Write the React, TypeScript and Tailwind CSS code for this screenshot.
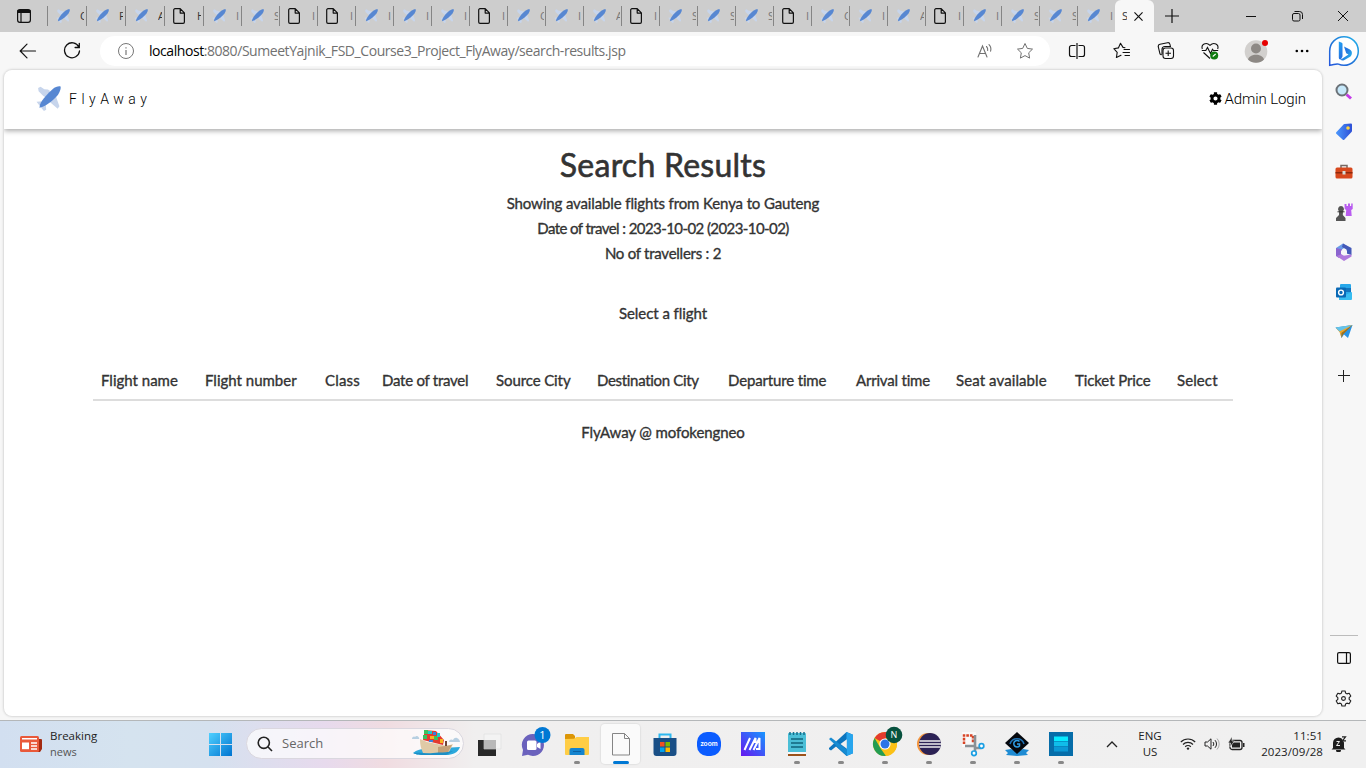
import React from "react";
import { FaCog } from "react-icons/fa";

const Plane = ({ className }: { className: string }) => (
  <svg viewBox="0 0 24 24" className={className}>
    <path d="M2 1.800 4.400.6 8 3l3.500.3 2 1.500L9.500 11 7 9.500 2.500 5zM19 8l.8 4 2.700 7.500-1.700 2.300L13 15zM.5 15.200l6.100-.5 2.800 2.800.4 5.300-2.200 1.200-3-3.500z" fill="#c7d5ec" />
    <path d="M23.600.5c-2-.5-5 .3-7.700 2.600C12 6.500 6 12.500 4 17.500L3.300 20.800l3.200-.9c5.200-2.300 11.500-7.700 14.700-11.600C23.400 4.800 24 2.200 23.600.5z" fill="#5787d2" />
  </svg>
);

const Doc = () => (
  <svg viewBox="0 0 12 16" className="h-4 w-3" fill="none" stroke="#111" strokeWidth="1.200" strokeLinejoin="round">
    <path d="M2 .7h5.200l4.200 4.200V14a1.300 1.300 0 0 1-1.300 1.300H2A1.300 1.300 0 0 1 .7 14V2A1.300 1.300 0 0 1 2 .7zM7.200.9v4.200h4.200" />
  </svg>
);

const tabs: [string, string][] = [
  ["p", "C"], ["p", "F"], ["p", "A"], ["d", "H"], ["p", "I"], ["p", "S"], ["d", "I"], ["d", "I"], ["p", "I"], ["p", "I"],
  ["p", "I"], ["d", "I"], ["p", "C"], ["p", "I"], ["p", "A"], ["d", "I"], ["p", "S"], ["p", "S"], ["p", "S"], ["d", "I"],
  ["p", "C"], ["p", "I"], ["p", "A"], ["d", "I"], ["p", "I"], ["p", "S"], ["p", "S"], ["p", "I"],
];

const TabStrip = () => (
  <div className="flex h-8 shrink-0 items-center bg-[#cdcdcd]">
    <div className="flex w-[47px] shrink-0 items-center pl-[17px]">
      <svg viewBox="0 0 14 14" className="h-3.5 w-3.5" fill="none" stroke="#111" strokeWidth="1.200">
        <rect x=".6" y=".6" width="12.800" height="12.800" rx="2.300" />
        <path d="M1 1.500h12v2H1z" fill="#111" />
        <path d="M4 4v9" />
      </svg>
    </div>
    {tabs.map(([kind, letter], i) => (
      <div key={i} className={`flex h-5 shrink-0 items-center border-l border-[#858585] ${i < 4 ? "w-[39px]" : "w-[38px]"}`}>
        <div className="flex w-[32px] shrink-0 items-center pl-[8px]">
          {kind === "p" ? <Plane className="h-3.5 w-3.5" /> : <Doc />}
        </div>
        <span className={`w-[4px] overflow-hidden font-['Open_Sans',sans-serif] text-[11px] leading-4 ${i < 4 ? "text-[#333]" : "text-[#777]"}`}>{letter}</span>
      </div>
    ))}
    <div className="flex h-8 w-[39px] shrink-0 items-center rounded-t-[6px] bg-[#f7f7f7] pl-[7px]">
      <span className="w-[5px] overflow-hidden font-['Open_Sans',sans-serif] text-[11px] text-[#333]">S</span>
      <svg viewBox="0 0 10 10" className="ml-[7px] h-[9px] w-[9px]" stroke="#111" strokeWidth="1.300"><path d="M.5.5l9 9M9.500.5l-9 9" /></svg>
    </div>
    <svg viewBox="0 0 14 14" className="ml-[11px] h-3.5 w-3.5 shrink-0" stroke="#111" strokeWidth="1.200"><path d="M7 0v14M0 7h14" /></svg>
    <div className="ml-auto flex shrink-0 items-center gap-[36px] pr-[18px]">
      <svg viewBox="0 0 10 10" className="h-[10px] w-[10px]" stroke="#111"><path d="M0 5.500h10" /></svg>
      <svg viewBox="0 0 10 10" className="h-[10px] w-[10px] overflow-visible" stroke="#111" fill="none"><rect x=".5" y="2.500" width="7.500" height="7.500" rx="1.500" /><path d="M2.500.5h5a3 3 0 0 1 3 3v4.500" /></svg>
      <svg viewBox="0 0 10 10" className="h-[10px] w-[10px]" stroke="#111"><path d="M0 0l10 10M10 0L0 10" /></svg>
    </div>
  </div>
);

const Bing = () => (
  <svg viewBox="0 0 32 32" className="h-8 w-8 overflow-visible">
    <defs>
      <linearGradient id="bing" x1="0" y1="0" x2="1" y2="1"><stop stopColor="#21a5f4" /><stop offset=".5" stopColor="#2672e0" /><stop offset="1" stopColor="#25c3ec" /></linearGradient>
      <linearGradient id="bub" x1="0" y1="1" x2="1" y2="0"><stop stopColor="#2457dc" /><stop offset=".5" stopColor="#217bd9" /><stop offset="1" stopColor="#21b5ec" /></linearGradient>
    </defs>
    <path d="M1.700 30.300V16A14.300 14.300 0 1 1 16 30.300c-2 0-4-.5-5.500-1.200-2.500-.8-5 .8-8.800 1.200z" fill="#fff" stroke="url(#bub)" strokeWidth="1.500" />
    <path d="M10.800 6.500l3 1.200c.5.200.7.600.7 1.200v12.600l-1.500 2.800c-1.300.4-2.200-.3-2.200-1.800zM16 11.500l5.500 2.800c2 1 2.700 2.700 2.300 4.700-.3 1.600-1.200 2.500-2.500 3.300l-5.300 2.900c-1.300.7-2.600.3-3.500-.5l8-5.200-2.300-1.300z" fill="url(#bing)" />
  </svg>
);

const star = "M9 1.500l2.300 4.900 5.200.7-3.800 3.700.9 5.300L9 13.600l-4.600 2.500.9-5.300L1.500 7.100l5.200-.7z";

const Toolbar = () => (
  <div className="flex h-[38px] shrink-0 items-center">
    <svg viewBox="0 0 18 16" className="ml-[19px] h-4 w-[18px]" fill="none" stroke="#111" strokeWidth="1.200" strokeLinecap="round"><path d="M16.500 8H1.500M8 1.200L1.200 8 8 14.800" /></svg>
    <svg viewBox="0 0 18 18" className="ml-[26px] h-[18px] w-[18px]" fill="none" stroke="#111" strokeWidth="1.300" strokeLinecap="round"><path d="M15.800 5A7.500 7.500 0 1 0 16.500 9M16.300 1.300v4.200h-4.200" /></svg>
    <div className="ml-[19px] flex h-[30px] w-[950px] shrink-0 items-center rounded-full bg-white pl-[18px]">
      <svg viewBox="0 0 16 16" className="h-4 w-4 shrink-0" fill="none" stroke="#777" strokeWidth="1"><circle cx="8" cy="8" r="7.500" /><path d="M8 7v5M8 4.300v1.200" strokeWidth="1.200" /></svg>
      <span className="ml-[15px] w-[480px] shrink-0 whitespace-nowrap font-['Open_Sans',sans-serif] text-[14px] leading-5 tracking-[-0.44px] text-[#717171]"><span className="text-black">localhost</span>:8080/SumeetYajnik_FSD_Course3_Project_FlyAway/search-results.jsp</span>
      <svg viewBox="0 0 18 16" className="ml-[348px] h-4 w-[18px] shrink-0" fill="none" stroke="#717171" strokeWidth="1.100" strokeLinecap="round"><path d="M1 14L5.500 3l4.500 11M2.500 10.500h6M9.500 3.500c1 1 1.400 2.300 1.200 4M12 1.700c1.700 1.700 2.300 4 1.600 6.500" /></svg>
      <svg viewBox="0 0 18 18" className="ml-[21px] h-[18px] w-[18px] shrink-0" fill="none" stroke="#717171" strokeLinejoin="round"><path d={star} /></svg>
    </div>
    <svg viewBox="0 0 18 16" className="ml-[18px] h-4 w-[18px]" fill="none" stroke="#111" strokeWidth="1.200"><path d="M7.500 2.500H3.500A2 2 0 0 0 1.500 4.500v7a2 2 0 0 0 2 2h4M10.500 2.500h4a2 2 0 0 1 2 2v7a2 2 0 0 1-2 2h-4M9 0v16" /></svg>
    <svg viewBox="0 0 18 18" className="ml-[27px] h-[18px] w-[18px]" fill="none" stroke="#111" strokeWidth="1.100" strokeLinecap="round" strokeLinejoin="round"><path d="M12 5.700l-2-.3L7.500 1.300 5.400 5.900.8 6.700l3.400 3.600-.8 5.200L8 13.200M11 7.500h5.500M10 10.500h6.500M12 13.500h4.500" /></svg>
    <svg viewBox="0 0 18 18" className="ml-[26px] h-[18px] w-[18px]" fill="none" stroke="#111" strokeWidth="1.100"><rect x="6" y="6" width="10.500" height="10.500" rx="2.500" /><path d="M11.200 8.500v5.500M8.500 11.200H14M4.500 13L3 12 1.300 5C1 3.500 1.500 2.500 3 2.200l7.500-1.500c1.300-.2 2.200.4 2.500 1.800l.3 1.500M5 12.500V7.500a3 3 0 0 1 3-3h6" /></svg>
    <svg viewBox="0 0 18 18" className="ml-[26px] h-[18px] w-[18px] overflow-visible" fill="none" stroke="#111" strokeWidth="1.100"><path d="M1.300 7C-.2 2.500 5-.5 9 3.300c4-3.800 9.200-.8 7.700 3.700M.8 8.500h4l1.700-3 3 6 2-4.300 1 1.300h4.700M2.500 10.500L9 16.500" /><circle cx="13.200" cy="13.500" r="4" fill="#107c10" stroke="none" /><path d="M11.700 14.500l3-2.500" stroke="#fff" /></svg>
    <svg viewBox="0 0 24 24" className="ml-[25px] h-6 w-6 overflow-visible"><circle cx="12" cy="12.500" r="11.300" fill="#d2d0ce" /><circle cx="12" cy="9.500" r="5" fill="#8d8985" /><path d="M4 20.500c1.300-6.500 14.700-6.500 16 0a11.300 11.300 0 0 1-16 0z" fill="#8d8985" /><circle cx="21" cy="4" r="3" fill="#e60000" /></svg>
    <svg viewBox="0 0 14 4" className="ml-[27px] h-1 w-3.5"><circle cx="1.800" cy="2" r="1.300" /><circle cx="7" cy="2" r="1.300" /><circle cx="12.200" cy="2" r="1.300" /></svg>
    <div className="ml-auto mr-[6px]"><Bing /></div>
  </div>
);

const Cell = ({ children }: { children: React.ReactNode }) => <div className="flex h-10 w-full items-center justify-center">{children}</div>;
const s18 = "h-[18px] w-[18px] overflow-visible";

const Sidebar = () => (
  <aside className="flex w-[43px] shrink-0 flex-col items-center pt-[2px]">
    <Cell><svg viewBox="0 0 18 18" className={s18}><path d="M11.500 11.500l4.500 4" stroke="#c43ae8" strokeWidth="3" /><circle cx="7" cy="7" r="5.500" fill="#c6e8fa" stroke="#6c7278" strokeWidth="2" /></svg></Cell>
    <Cell><svg viewBox="0 0 18 18" className={s18}><defs><linearGradient id="tag"><stop stopColor="#4993fa" /><stop offset="1" stopColor="#3053d8" /></linearGradient></defs><path d="M9.500 2L16 1.500v6.500L8.500 16 2 10z" fill="url(#tag)" stroke="url(#tag)" strokeWidth="2" strokeLinejoin="round" /><circle cx="13" cy="5" r="1.800" fill="#ffd43b" /></svg></Cell>
    <Cell><svg viewBox="0 0 18 18" className={s18}><path d="M6 5V2.500h6V5" fill="none" stroke="#766762" strokeWidth="1.500" /><rect x=".5" y="4.500" width="17" height="11" rx="1.500" fill="#d7481d" /><path d="M.5 9h17v1.500H.5z" fill="#8e2a0e" /><path d="M7.500 8h3v3.500h-3z" fill="#d6ddd8" /></svg></Cell>
    <Cell><svg viewBox="0 0 18 18" className={s18}><path d="M9.500 1h2v2h1.500V.5h2V3h1.200V.5h1.500v5.500l-1.500 1 .5 6h-6l.5-6-1.500-1z" fill="#b95cf0" /><path d="M6 3a3 3 0 0 1 2 5.200l-.2 3.800 2.700 3V18H1v-3l3-3V8.200A3 3 0 0 1 6 3z" fill="#555" /><path d="M2.500 8.800h7" stroke="#333" /></svg></Cell>
    <Cell><svg viewBox="0 0 18 18" className={s18}><path d="M1 5L8 .5 12 3 7 6.500v5L1 13z" fill="#6a9be8" /><path d="M1 5v8l3 2 3-3.500v-5z" fill="#8b65cf" /><path d="M8 .5l8.500 4.500v7l-5-1.500V6.500L7 4z" fill="#4359b8" /><path d="M1.500 13l5.500-2 3 1.500 6.500-1v2L9 18z" fill="#b079dd" /><path d="M9 6l3 1.700v3.400L9 12.800l-3-1.700V7.700z" fill="#f7f7f7" /></svg></Cell>
    <Cell><svg viewBox="0 0 18 18" className={s18}><rect x="5" y="1" width="11" height="13" rx="1" fill="#28a8ea" /><path d="M5 5h11v4H5z" fill="#1375bd" /><path d="M4 9l6 3 7-3v7a1 1 0 0 1-1 1H4z" fill="#37bdf1" /><rect x="1" y="4.500" width="10" height="10" rx="1" fill="#0969b5" /><circle cx="6" cy="9.500" r="2.400" fill="none" stroke="#fff" strokeWidth="1.400" /></svg></Cell>
    <Cell><svg viewBox="0 0 18 18" className={s18}><path d="M.5 4.500L17.500 2 13 15 9 11.500 6.500 15 5 9z" fill="#2793e6" /><path d="M1 5L17.500 2 6.500 10v5L4.500 9z" fill="#f5a623" /><path d="M.5 4.500L17.500 2 4.500 8.500z" fill="#62c3ec" /><path d="M6.500 10l11-8L8 11.500 6.500 15z" fill="#a9710f" /></svg></Cell>
    <div className="mt-1 w-full"><Cell><svg viewBox="0 0 12 12" className="h-3 w-3 overflow-visible" stroke="#222"><path d="M5.500 0v12M0 5.500h12" /></svg></Cell></div>
    <div className="mt-auto h-px w-7 bg-[#bcbcbc]" />
    <div className="w-full pb-[2px] pt-[2px]">
      <Cell><svg viewBox="0 0 14 12" className="h-3 w-3.5" fill="none" stroke="#111" strokeWidth="1.200"><rect x=".6" y=".6" width="12.800" height="10.800" rx="1.500" /><path d="M9.500.6v10.800" /></svg></Cell>
      <Cell><svg viewBox="0 0 18 18" className="h-[17px] w-[17px] overflow-visible" fill="none" stroke="#222" strokeWidth="1.200" strokeLinejoin="round"><path d="M7.300 1h3.400l.5 2.300 1.400.8L15 3.400l1.700 3L15 8.100v1.800l1.700 1.700-1.700 3-2.400-.7-1.400.8-.5 2.300H7.300l-.5-2.300-1.400-.8-2.400.7-1.700-3L3 9.900V8.100L1.300 6.400l1.700-3 2.400.7 1.400-.8z" /><circle cx="9" cy="9" r="2" /></svg></Cell>
    </div>
  </aside>
);

const bold = "whitespace-nowrap font-['Lato',sans-serif] text-[#333] [-webkit-text-stroke:0.35px_#333]";

const Page = () => (
  <main className="mb-1 ml-1 flex w-[1318px] shrink-0 flex-col overflow-hidden rounded-lg bg-white shadow-[0_0_2px_1px_#d8d8d8]">
    <header className="flex h-[59px] shrink-0 items-center pb-[2px] pl-[32px] pr-4 shadow-[0_2px_5px_#aaa]">
      <Plane className="h-[25px] w-[25px]" />
      <span className="ml-[8px] font-['Roboto',sans-serif] text-[14px] font-light leading-5 tracking-[4.500px] text-black">FlyAway</span>
      <span className="ml-auto flex items-center gap-[3px] font-['Roboto',sans-serif] text-[15px] font-light leading-5 tracking-[-0.100px] text-black"><FaCog className="h-[13px] w-[13px]" />Admin Login</span>
    </header>
    <section className="flex flex-col items-center">
      <h1 className="mt-[18px] whitespace-nowrap font-['Lato',sans-serif] text-[32px] leading-[35px] tracking-[0.250px] text-[#333] [-webkit-text-stroke:0.6px_#333]">Search Results</h1>
      <p className={`${bold} mt-[9px] text-[15px] leading-[25px] tracking-[-0.12px]`}>Showing available flights from Kenya to Gauteng</p>
      <p className={`${bold} text-[15px] leading-[25px] tracking-[-0.58px]`}>Date of travel : 2023-10-02 (2023-10-02)</p>
      <p className={`${bold} text-[15px] leading-[25px] tracking-[-0.25px]`}>No of travellers : 2</p>
      <p className={`${bold} mt-[35px] text-[15px] leading-[25px] tracking-[-0.05px]`}>Select a flight</p>
      <div className={`${bold} mt-[36px] flex h-[39px] w-[1140px] items-center border-b-2 border-[#ddd] pl-[8px] text-[15px] tracking-[-0.1px]`}>
        <span className="w-[104px] tracking-[0]">Flight name</span>
        <span className="w-[120px] tracking-[0]">Flight number</span>
        <span className="w-[57px] tracking-[0.2px]">Class</span>
        <span className="w-[114px] tracking-[-0.25px]">Date of travel</span>
        <span className="w-[101px]">Source City</span>
        <span className="w-[131px] tracking-[-0.32px]">Destination City</span>
        <span className="w-[128px] tracking-[-0.15px]">Departure time</span>
        <span className="w-[100px] tracking-[-0.2px]">Arrival time</span>
        <span className="w-[119px] tracking-[0.1px]">Seat available</span>
        <span className="w-[102px]">Ticket Price</span>
        <span className="tracking-[0.1px]">Select</span>
      </div>
      <p className={`${bold} mt-[19px] text-[15px] leading-[25px] tracking-[-0.1px]`}>FlyAway @ mofokengneo</p>
    </section>
  </main>
);

const TaskApp = ({ children, dot, active }: { children: React.ReactNode; dot?: boolean; active?: boolean }) => (
  <div className="flex w-[44px] shrink-0 justify-center">
    <div className={`relative flex h-10 w-[39px] items-center justify-center rounded ${active ? "bg-[#fafafa] shadow-[0_0_1px_1px_#e2e2e2]" : ""}`}>
      <svg viewBox="0 0 24 24" className="h-6 w-6 overflow-visible">{children}</svg>
      {dot && <i className="absolute bottom-0 h-[3px] w-[6px] rounded-full bg-[#888]" />}
      {active && <i className="absolute bottom-0 h-[3px] w-4 rounded-full bg-[#0078d4]" />}
    </div>
  </div>
);

const Taskbar = () => (
  <footer className="flex h-12 shrink-0 items-center border-t border-[#b4b7b9] bg-[linear-gradient(90deg,#d2dff0_0,#d5e3ef_130px,#d5e1ef_210px,#e7daed_325px,#f0dce1_385px,#f0efef_475px,#f0f0f0_100%)] pb-[2px] font-['Open_Sans',sans-serif] text-[11px] text-[#222]">
    <div className="flex w-[198px] shrink-0 items-center pl-5">
      <svg viewBox="0 0 22 18" className="h-[18px] w-[22px]"><path d="M17 4h4a1 1 0 0 1 1 1v9l-2 3h-3z" fill="#a32a10" /><rect y="1" width="19" height="16" rx="1.500" fill="#e9593a" /><path d="M2 3.800h15M11 8h6M11 11h6M11 14h6" stroke="#fff" strokeWidth="1.500" /><path d="M2 7.500h7v6.700H2z" fill="#fff" /></svg>
      <div className="ml-2 leading-4"><div className="text-[11.500px]">Breaking</div><div className="text-[#555]">news</div></div>
    </div>
    <TaskApp><defs><linearGradient id="win" x1="0" y1="0" x2="1" y2="1"><stop stopColor="#4fd0ff" /><stop offset="1" stopColor="#0074d0" /></linearGradient></defs><path d="M1 1h11v11H1zM13 1h11v11H13zM1 13h11v11H1zM13 13h11v11H13z" fill="url(#win)" /></TaskApp>
    <div className="ml-[4px] mr-[1px] flex h-[31px] w-[218px] shrink-0 items-center rounded-full border border-[#dad7df] bg-white/70 pl-[10px]">
      <svg viewBox="0 0 16 16" className="h-4 w-4" fill="none" stroke="#222" strokeWidth="1.600"><circle cx="6.800" cy="6.800" r="5.600" /><path d="M10.800 10.800l4.200 4.200" /></svg>
      <span className="ml-[9px] text-[13px] text-[#666]">Search</span>
      <svg viewBox="0 0 50 28" className="ml-auto mr-[2px] h-7 w-[50px]">
        <path d="M1 9c0-3 3-3 3-2 2-3 5 1 4 2zM38 12c0-3 3-3 4-2 2-5 7-1 7 2z" fill="#b7cfe1" />
        <path d="M2 23c4-3 7-4 11-4l36-2c-2 6-8 8-14 8H13c-6 0-9-1-11-2z" fill="#2da9dc" />
        <path d="M9 9l7 3 20 4 6-2-4 8c-6 3-16 3-26 1-2-5-3-8-3-14z" fill="#dfcaa6" /><path d="M27 17l14-2-4 7-10 2z" fill="#c4a178" />
        <path d="M13 5l-1 5 20 5 1-5-8-9-12-1z" fill="#e33b2f" /><path d="M12 5h4v4h-4zM23 6h4v4h-4zM13 0h4v4h-4z" fill="#3cc25d" /><path d="M17 1h4v3h-4zM26 3h3v4h-3z" fill="#1dcbc9" /><path d="M19 6h4v3h-4zM29 9h3v4h-3z" fill="#f9b51f" /><path d="M18 10h4v2h-4zM22 2h3v3h-3z" fill="#3c7fdc" /><path d="M34 11h2v5h-2z" fill="#704639" />
        <path d="M2 23c8-1 12 1 20 0s12 0 20-2l-7 4H13c-6 0-9-1-11-2z" fill="#1c8fc5" />
      </svg>
    </div>
    <div className="flex pl-[1.500px]">
      <TaskApp><path d="M1 8h18v16H1z" fill="#292929" /><path d="M7 2h17v15H7z" fill="#f3f3f3" stroke="#ddd" strokeWidth=".6" /><path d="M7 8h12v9H7z" fill="#b8b8b8" /></TaskApp>
      <TaskApp><path d="M12 2a11 11 0 1 1-5 20.800L1 24l1-6A11 11 0 0 1 12 2z" fill="#6b62bd" /><rect x="6" y="8.500" width="9.500" height="9.500" rx="1.500" fill="#fff" /><path d="M16 12l3.500-2.500v7.500L16 15z" fill="#fff" /><circle cx="21.500" cy="3" r="8" fill="#0078d4" /><text x="21.500" y="7" textAnchor="middle" fontSize="11" fontFamily="Open Sans, sans-serif" fill="#fff">1</text></TaskApp>
      <TaskApp dot><path d="M0 3a1 1 0 0 1 1-1h7l2 2v4H0z" fill="#dc9607" /><path d="M0 7l9-.2L11.500 5H24v17a1 1 0 0 1-1 1H1a1 1 0 0 1-1-1z" fill="#ffcd45" /><path d="M4.500 23v-5a2 2 0 0 1 2-2h11a2 2 0 0 1 2 2v5z" fill="#1484cf" /><path d="M8 19.500h8" stroke="#0b61a4" /></TaskApp>
      <TaskApp active><path d="M3.500 1.500h12l5 5V23h-17zM15.500 1.500v5h5" fill="#fafafa" stroke="#858585" /></TaskApp>
      <TaskApp><path d="M6.500 7V2.500h11V7" fill="none" stroke="#2db8ef" strokeWidth="2" /><path d="M.5 6h23v15a3 3 0 0 1-3 3h-17a3 3 0 0 1-3-3z" fill="#194f86" /><path d="M7 10h4.500v4.500H7z" fill="#f25022" /><path d="M12.500 10H17v4.500h-4.500z" fill="#7fba00" /><path d="M7 15.500h4.500V20H7z" fill="#00a4ef" /><path d="M12.500 15.500H17V20h-4.500z" fill="#ffb900" /></TaskApp>
      <TaskApp><rect width="24" height="24" rx="10" fill="#0b5cff" /><text x="12" y="14.300" textAnchor="middle" fontSize="7" fontWeight="700" fontFamily="Lato, sans-serif" fill="#fff">zoom</text></TaskApp>
      <TaskApp><defs><linearGradient id="ma" x1="0" y1="1" x2="1" y2="0"><stop stopColor="#6717ef" /><stop offset="1" stopColor="#1796ff" /></linearGradient></defs><path d="M0 0h24v24H0z" fill="url(#ma)" /><path d="M3.500 18L9 6M8.500 18L14.500 6v5M12.500 18L18.500 6v12M15 17h3" stroke="#fff" strokeWidth="2" fill="none" /></TaskApp>
      <TaskApp dot><rect x="3" y="1" width="18" height="22" rx="1" fill="#4bbfd7" /><path d="M5 0v3M8.500 0v3M12 0v3M15.500 0v3M19 0v3" stroke="#176f8c" strokeWidth="1.500" /><path d="M6 7h12M6 11h12M6 15h12" stroke="#12667e" strokeWidth="1.500" /><path d="M3 20h18v3.500H3z" fill="#f7f7f7" /><path d="M3 23h18" stroke="#9b521a" strokeWidth="2" /></TaskApp>
      <TaskApp dot><path d="M17.500 0L24 2.800v18.400L17.500 24 7 14.500 2 18.500 0 17.200V16L17.500 0z" fill="#0c75be" /><path d="M17.500 0L24 2.800v18.400L17.500 24z" fill="#28a5ed" /><path d="M0 7l2-1.500L18 17.800V24z" fill="#168bd2" /><path d="M17.800 7.200v9.600L11.500 12z" fill="#f0f0f0" /></TaskApp>
      <TaskApp dot><circle cx="12" cy="12" r="12" fill="#fbc116" /><path d="M1.600 6A12 12 0 0 1 22.400 6L12 12z" fill="#e33b2e" /><path d="M1.600 6l6 10.500L13 24A12 12 0 0 1 1.600 6z" fill="#249d52" /><path d="M12 6h10.400a12 12 0 0 1-9.900 18l4.700-9z" fill="#fbc116" /><circle cx="12" cy="12" r="5.600" fill="#fff" /><circle cx="12" cy="12" r="4.500" fill="#2b73e8" /><circle cx="21" cy="3" r="8.300" fill="#07513e" /><text x="21" y="6.300" textAnchor="middle" fontSize="9" fontFamily="Open Sans, sans-serif" fill="#fff">N</text></TaskApp>
      <TaskApp dot><circle cx="11" cy="12" r="11" fill="#f4943b" /><circle cx="13" cy="12" r="11" fill="#2c2255" /><path d="M2.500 9h21M2 12h22M2.500 15h21" stroke="#eee" strokeWidth="1.700" /></TaskApp>
      <TaskApp dot><rect x="1" y="0" width="14" height="15" fill="#fff" opacity=".6" /><path d="M3 12V3.500h9V11" fill="none" stroke="#d84325" strokeWidth="2.500" strokeDasharray="2.600 1" /><path d="M14 3v13h6M4 14h10v7" fill="none" stroke="#8a9196" strokeWidth="2.600" /><circle cx="20.500" cy="14" r="2.300" fill="#fff" stroke="#1b9fe3" strokeWidth="1.700" /><circle cx="13" cy="21.300" r="2.300" fill="#fff" stroke="#1b9fe3" strokeWidth="1.700" /></TaskApp>
      <TaskApp dot><path d="M0 18l6-1 6 3 6-3 6 1-3 3 2 2-11 1-11-1 2-2z" fill="#1e8bd3" /><path d="M12 0l12 11-12 11L0 11z" fill="#05080d" /><path d="M5 12c2-7 12-7 14 0" stroke="#2072b5" strokeWidth="1.500" fill="none" /><path d="M14.500 9.500a3.300 3.300 0 1 0 0 4.500v-2h-2.500" stroke="#2e9ee6" strokeWidth="1.500" fill="none" /></TaskApp>
      <TaskApp dot><path d="M0 0h24v24H0z" fill="#066da9" /><path d="M5 4.500h14v4.700H5z" fill="#08eaff" /><path d="M5 9.700h14v4.600H5z" fill="#10bdea" /><path d="M5 14.800h14v4.700H5z" fill="#0b98d5" /></TaskApp>
    </div>
    <div className="ml-auto flex shrink-0 items-center">
      <svg viewBox="0 0 12 8" className="h-2 w-3" fill="none" stroke="#222" strokeWidth="1.300"><path d="M1 7l5-5 5 5" /></svg>
      <div className="ml-[18px] w-[28px] text-center text-[11.500px] leading-4">ENG<br />US</div>
      <svg viewBox="0 0 16 13" className="ml-4 h-[13px] w-4" fill="none" stroke="#222" strokeWidth="1.200"><path d="M.8 5a10.200 10.200 0 0 1 14.400 0M3 7.500a7 7 0 0 1 10 0M5.200 9.800a4 4 0 0 1 5.600 0" /><circle cx="8" cy="11.600" r="1.200" fill="#222" stroke="none" /></svg>
      <svg viewBox="0 0 16 14" className="ml-2 h-3.5 w-4" fill="none" stroke="#222"><path d="M1 5h2.500L7 1.800v10.400L3.500 9H1zM9 5a3 3 0 0 1 0 4M11 3.200a5.500 5.500 0 0 1 0 7.600" /><path d="M13 1.500a8 8 0 0 1 0 11" stroke="#aaa" /></svg>
      <svg viewBox="0 0 17 14" className="ml-2 h-3.5 w-[17px]"><rect x="2" y="3.500" width="12" height="9" rx="2" fill="none" stroke="#222" strokeWidth="1.300" /><path d="M4 5.500h8v5H4zM15 6h1.500v4H15z" fill="#222" /><path d="M4-.5L0 6h2.500L2 10l4.500-6H4z" fill="#222" stroke="#f0f0f0" strokeWidth=".6" /></svg>
      <div className="ml-4 w-[62px] whitespace-nowrap text-right text-[11.500px] leading-4 tracking-[0.08px]">11:51<br />2023/09/28</div>
      <svg viewBox="0 0 16 16" className="ml-2 mr-[19px] h-4 w-4"><path d="M2 12V7a5.500 5.500 0 0 1 11 0v5l1.500 1.500H.5zM5 14h5a2.500 2.500 0 0 1-5 0z" fill="#1d1d1d" /><path d="M5.500 5.500h3L5.500 9.500h3.500" stroke="#f0f0f0" fill="none" /><path d="M10.500-.5h5.500v6h-4z" fill="#f0f0f0" /><path d="M11 .8h3.500L11.500 4.800H15" stroke="#222" strokeWidth="1.200" fill="none" /></svg>
    </div>
  </footer>
);

export default function App() {
  return (
    <div className="flex h-[768px] w-[1366px] flex-col overflow-hidden bg-[#f7f7f7]">
      <TabStrip />
      <Toolbar />
      <div className="flex min-h-0 flex-1"><Page /><Sidebar /></div>
      <Taskbar />
    </div>
  );
}
